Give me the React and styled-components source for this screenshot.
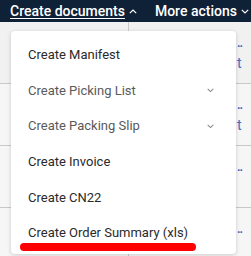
import React from 'react'
import styled, { createGlobalStyle } from 'styled-components'

const GlobalStyle = createGlobalStyle`
    html, body {
        margin: 0;
        padding: 0;
        background: #f4f4f5;
        font-family: Roboto, "Liberation Sans", sans-serif;
        overflow: hidden;
    }
`

const Page = styled.div`
    position: relative;
    width: 251px;
    height: 256px;
    overflow: hidden;
`

const TopBar = styled.div`
    height: 22px;
    background: #0f2137;
    display: flex;
    align-items: center;
    padding-left: 10px;
    gap: 18px;
    white-space: nowrap;
`

const TopAction = styled.span`
    display: flex;
    align-items: center;
    gap: 4px;
    color: #fff;
    font-size: 14px;
    font-weight: 500;
    text-decoration: ${props => props.active ? 'underline' : 'none'};
    text-underline-offset: 2px;
`

const Table = styled.div`
    display: flex;
    flex-direction: column;
`

const Row = styled.div`
    display: grid;
    grid-template-columns: 128px 1fr;
    height: ${props => props.h}px;
    border-bottom: 1px solid #c9c9cb;
    background: ${props => props.shade ? '#f1f1f2' : '#f6f6f7'};
`

const Cell = styled.div`
    border-left: ${props => props.divider ? '1px solid #c9c9cb' : 'none'};
    position: relative;
`

const CellLink = styled.span`
    position: absolute;
    left: 108px;
    top: ${props => props.top}px;
    color: #3b6fc4;
    font-size: 14px;
`

const Dots = styled.span`
    position: absolute;
    left: 108px;
    top: ${props => props.top}px;
    color: #3b6fc4;
    font-size: 12px;
    letter-spacing: -1px;
    font-weight: 700;
`

const Menu = styled.ul`
    position: absolute;
    left: 11px;
    top: 31px;
    width: 225px;
    height: 223px;
    margin: 0;
    padding: 6px 0 0;
    box-sizing: border-box;
    list-style: none;
    background: #fff;
    border-radius: 4px;
    box-shadow: 0 1px 4px rgba(0, 0, 0, 0.18);
`

const MenuItem = styled.li`
    position: relative;
    height: 35.6px;
    display: flex;
    align-items: center;
    justify-content: space-between;
    padding: 0 22px 0 17px;
    font-size: 13px;
    color: ${props => props.sub ? '#5a5a5a' : '#2a2a2a'};
    white-space: nowrap;
`

const Highlight = styled.span`
    position: absolute;
    left: 9px;
    top: 28px;
    width: 176px;
    height: 8px;
    border-radius: 4px;
    background: #ff0000;
`

const Chevron = ({ up, color = '#fff', size = 8 }) => (
    <svg width={size} height={size / 2 + 1} viewBox="0 0 8 5" fill="none">
        <path
            d={up ? 'M0.8 4.2 L4 1 L7.2 4.2' : 'M0.8 0.8 L4 4 L7.2 0.8'}
            stroke={color}
            strokeWidth="1.2"
        />
    </svg>
)

const items = [
    { label: 'Create Manifest' },
    { label: 'Create Picking List', sub: true },
    { label: 'Create Packing Slip', sub: true },
    { label: 'Create Invoice' },
    { label: 'Create CN22' },
    { label: 'Create Order Summary (xls)', marked: true },
]

export default function App() {
    return (
        <Page>
            <GlobalStyle />
            <TopBar>
                <TopAction active>
                    Create documents <Chevron up />
                </TopAction>
                <TopAction>
                    More actions <Chevron />
                </TopAction>
            </TopBar>
            <Table>
                <Row h={61} shade>
                    <Cell />
                    <Cell divider>
                        <Dots top={14}>..</Dots>
                        <CellLink top={33}>t</CellLink>
                    </Cell>
                </Row>
                <Row h={61}>
                    <Cell />
                    <Cell divider>
                        <Dots top={14}>..</Dots>
                        <CellLink top={33}>t</CellLink>
                    </Cell>
                </Row>
                <Row h={61}>
                    <Cell />
                    <Cell divider>
                        <Dots top={14}>..</Dots>
                    </Cell>
                </Row>
                <Row h={61}>
                    <Cell />
                    <Cell divider>
                        <Dots top={14}>..</Dots>
                    </Cell>
                </Row>
            </Table>
            <Menu>
                {items.map(item => (
                    <MenuItem key={item.label} sub={item.sub}>
                        <span>{item.label}</span>
                        {item.sub && <Chevron color="#888" size={7} />}
                        {item.marked && <Highlight />}
                    </MenuItem>
                ))}
            </Menu>
        </Page>
    )
}
